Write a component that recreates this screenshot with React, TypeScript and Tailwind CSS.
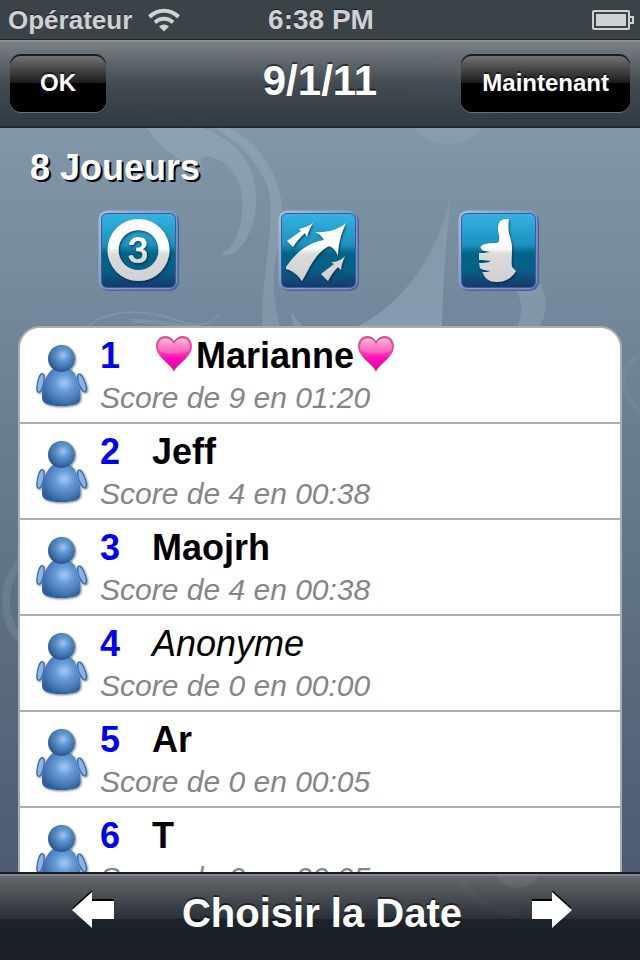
import React from "react";

type Player = { rank: number; name: string; score: number; time: string; hearts?: boolean; anonymous?: boolean };

const players: Player[] = [
  { rank: 1, name: "Marianne", score: 9, time: "01:20", hearts: true },
  { rank: 2, name: "Jeff", score: 4, time: "00:38" },
  { rank: 3, name: "Maojrh", score: 4, time: "00:38" },
  { rank: 4, name: "Anonyme", score: 0, time: "00:00", anonymous: true },
  { rank: 5, name: "Ar", score: 0, time: "00:05" },
  { rank: 6, name: "T", score: 0, time: "00:05" },
];

function Swirls() {
  return (
    <svg
      aria-hidden="true"
      viewBox="0 0 640 960"
      preserveAspectRatio="xMidYMid slice"
      className="pointer-events-none absolute inset-0 size-full"
    >
      <defs>
        <linearGradient id="wisp" x1="0" y1="0" x2="0" y2="1">
          <stop offset="0" stopColor="#b4cbdc" stopOpacity="0.1" />
          <stop offset="1" stopColor="#b4cbdc" stopOpacity="0.32" />
        </linearGradient>
      </defs>
      <g fill="#b4cbdc" fillOpacity="0.22">
        <path d="M136 104C146 136 168 158 204 170C196 160 202 154 212 157C236 166 244 186 242 212C240 236 232 250 220 254C224 258 236 254 243 244C256 226 258 202 254 180C246 148 222 134 196 126C170 118 150 114 136 104Z" />
        <path d="M186 116C224 128 256 154 268 188C277 222 262 262 262 330H281C273 300 271 272 278 250C288 222 282 188 268 164C252 138 226 120 186 116Z" />
        <path d="M516 290C524 304 522 316 516 330H538C548 314 548 296 540 284Z" />
        <path d="M292 311C294 318 300 324 308 330H296C292 324 291 318 292 311Z" />
      </g>
      <path d="M454 170C450 226 418 300 350 330H442C443 270 448 220 454 170Z" fill="url(#wisp)" />
      <circle cx="448" cy="100" r="44" fill="#b4cbdc" fillOpacity="0.12" />
      <g fill="none" stroke="#b4cbdc" strokeOpacity="0.18" strokeWidth="2">
        <path d="M86 328C110 306 150 310 182 322C200 328 214 322 219 315" />
        <path d="M132 321C160 320 170 326 200 327" strokeWidth="4" />
        <path d="M648 350C616 366 616 392 648 420" strokeWidth="5" strokeOpacity="0.08" />
        <path d="M30 556C-2 572 -2 630 30 646" strokeWidth="8" strokeOpacity="0.14" />
        <path d="M456 872C466 894 488 912 522 914" strokeWidth="8" />
      </g>
      <circle cx="517" cy="864" r="24" fill="#c8d4e6" fillOpacity="0.5" />
    </svg>
  );
}

function Tile({ label, children }: { label: string; children: React.ReactNode }) {
  return (
    <button type="button" aria-label={label} className="block">
      <svg viewBox="0 0 82 82" className="size-[82px]">
        <defs>
          <linearGradient id="tileBlue" x1="0" y1="0" x2="0" y2="1">
            <stop offset="0" stopColor="#35b2e1" />
            <stop offset="0.42" stopColor="#1e91bf" />
            <stop offset="0.54" stopColor="#006587" />
            <stop offset="0.75" stopColor="#07608a" />
            <stop offset="1" stopColor="#163b6c" />
          </linearGradient>
          <linearGradient id="tileRim" x1="0" y1="0" x2="1" y2="1">
            <stop offset="0" stopColor="#a9bfe0" />
            <stop offset="0.5" stopColor="#7f9bcb" />
            <stop offset="1" stopColor="#7890c2" />
          </linearGradient>
          <linearGradient id="tileInk" gradientUnits="userSpaceOnUse" x1="0" y1="8" x2="0" y2="72">
            <stop offset="0" stopColor="#ffffff" />
            <stop offset="0.46" stopColor="#ffffff" />
            <stop offset="0.56" stopColor="#dcdcdd" />
            <stop offset="1" stopColor="#d0d0d2" />
          </linearGradient>
          <filter id="tileShadow" x="-20%" y="-20%" width="140%" height="140%">
            <feDropShadow dx="1" dy="1.5" stdDeviation="1" floodColor="#022c44" floodOpacity="0.75" />
          </filter>
        </defs>
        <rect x="2" y="2" width="79" height="79" rx="9" fill="#4f5f9c" />
        <rect x="0.5" y="0.5" width="79" height="79" rx="9" fill="url(#tileRim)" />
        <rect x="3" y="3" width="75" height="75" rx="6" fill="#3c5a9c" />
        <rect x="4" y="4" width="73" height="73" rx="5" fill="url(#tileBlue)" />
        <g filter="url(#tileShadow)" fill="url(#tileInk)">
          {children}
        </g>
      </svg>
    </button>
  );
}

function Heart() {
  return (
    <svg aria-hidden="true" viewBox="0 0 44 40" className="h-10 w-11 shrink-0">
      <defs>
        <linearGradient id="heartFill" x1="0" y1="0" x2="0" y2="1">
          <stop offset="0" stopColor="#e0559a" />
          <stop offset="0.45" stopColor="#ff3db4" />
          <stop offset="0.65" stopColor="#ff08b8" />
          <stop offset="1" stopColor="#e400a4" />
        </linearGradient>
        <linearGradient id="heartGloss" x1="0" y1="0" x2="0" y2="1">
          <stop offset="0" stopColor="#ffc4e0" />
          <stop offset="0.4" stopColor="#ff8cc8" />
          <stop offset="1" stopColor="#ff5cbc" />
        </linearGradient>
      </defs>
      <path
        d="M22 35C19 28 4.500 21 4.500 10.500C4.500 4 8.500 0.500 13 0.500C17 0.500 20.500 2.500 22 6C23.500 2.500 27 0.500 31 0.500C35.500 0.500 39.500 4 39.500 10.500C39.500 21 25 28 22 35Z"
        fill="url(#heartFill)"
        stroke="#c93c85"
        strokeWidth="0.8"
      />
      <path
        d="M6.500 14C5 6 9 2.500 13 2.500C17 2.500 20.500 4.500 22 8.500C23.500 4.500 27 2.500 31 2.500C35 2.500 39 6 37.500 14C32 18 27 18 22 17C17 18 12 18 6.500 14Z"
        fill="url(#heartGloss)"
      />
    </svg>
  );
}

function Avatar() {
  return (
    <svg aria-hidden="true" viewBox="0 0 56 72" className="mt-3 ml-3.5 h-[72px] w-14 shrink-0">
      <defs>
        <radialGradient id="headFill" cx="0.56" cy="0.38" r="0.62">
          <stop offset="0" stopColor="#a3c6ee" />
          <stop offset="0.35" stopColor="#6197d0" />
          <stop offset="0.75" stopColor="#3d6fa9" />
          <stop offset="1" stopColor="#2b5588" />
        </radialGradient>
        <radialGradient id="bodyFill" cx="0.58" cy="0.38" r="0.62">
          <stop offset="0" stopColor="#a5ccf5" />
          <stop offset="0.4" stopColor="#6499d4" />
          <stop offset="0.85" stopColor="#4074b0" />
          <stop offset="1" stopColor="#305f98" />
        </radialGradient>
        <filter id="avatarShadow" x="-20%" y="-20%" width="150%" height="150%">
          <feDropShadow dx="1" dy="1" stdDeviation="1" floodColor="#000000" floodOpacity="0.5" />
        </filter>
      </defs>
      <g filter="url(#avatarShadow)">
        <ellipse cx="6.500" cy="43" rx="3" ry="9.500" transform="rotate(12 6.500 43)" fill="#8ab6e6" stroke="#3a6ba5" strokeWidth="1.2" />
        <ellipse cx="48" cy="43" rx="3" ry="9.500" transform="rotate(-20 48 43)" fill="#8ab6e6" stroke="#3a6ba5" strokeWidth="1.2" />
        <path d="M19 29C12 34 8 44 8 58C8 64 16 66 27 66C39 66 46.500 64 46.500 58C46.500 44 43 34 36 29Z" fill="url(#bodyFill)" />
        <circle cx="27.500" cy="18.500" r="13.500" fill="url(#headFill)" />
      </g>
    </svg>
  );
}

function PlayerRow({ player }: { player: Player }) {
  return (
    <li className="flex h-24 border-b-2 border-[#adadad]">
      <Avatar />
      <div className="ml-2.5 min-w-0 flex-1 pt-2">
        <div className="flex text-[36px] leading-10 font-bold">
          <span className="w-[52px] shrink-0 text-[#0000f5]">{player.rank}</span>
          {player.hearts && <Heart />}
          <span className={player.anonymous ? "font-normal italic" : ""}>{player.name}</span>
          {player.hearts && <Heart />}
        </div>
        <p className="text-[30px] leading-[44px] whitespace-nowrap text-[#858585] italic">
          Score de {player.score} en {player.time}
        </p>
      </div>
    </li>
  );
}

function BarButton({ children }: { children: React.ReactNode }) {
  return (
    <button
      type="button"
      className="block h-[58px] min-w-24 rounded-[11px] bg-linear-to-b from-[#7a7a7a] from-0% via-[#1c1c1c] via-50% to-black to-50% px-[21px] text-[24px] leading-7 font-bold shadow-[inset_0_2px_0_#1b1e21,0_1px_0_#6b7176] text-shadow-[0_-2px_0_#00000080]"
    >
      {children}
    </button>
  );
}

export default function App() {
  return (
    <div className="relative flex h-screen flex-col overflow-hidden bg-linear-to-b from-[#8aa2b1] to-[#46546b] font-['Liberation_Sans',Arial,sans-serif] text-white">
      <Swirls />

      <div className="relative grid h-10 shrink-0 grid-cols-[1fr_auto_1fr] items-center border-b border-[#1e2428] bg-[#2c3236]/85 px-2 pr-1.5 font-bold text-[#cfd1d3] text-shadow-[0_-1px_0_#00000080]">
        <div className="flex items-center gap-4 text-[26px] leading-8">
          <span>Opérateur</span>
          <svg aria-hidden="true" viewBox="0 0 32 24" className="h-6 w-8" fill="none" stroke="#cfd1d3" strokeWidth="4">
            <path d="M1.500 9C9.500 0.700 22.500 0.700 30.500 9" />
            <path d="M7 14.500C12 9.500 20 9.500 25 14.500" />
            <path d="M16 23.500L11 18.500C14 15.700 18 15.700 21 18.500Z" fill="#cfd1d3" stroke="none" />
          </svg>
        </div>
        <span className="text-[28px] leading-8">6:38 PM</span>
        <svg aria-hidden="true" viewBox="0 0 42 20" className="h-5 w-[42px] justify-self-end">
          <rect x="1" y="1" width="36" height="18" rx="1" fill="none" stroke="#cfd1d3" strokeWidth="2" />
          <rect x="4" y="4" width="30" height="12" fill="#cfd1d3" />
          <path d="M38 7H41V13H38" fill="none" stroke="#cfd1d3" strokeWidth="2" />
        </svg>
      </div>

      <header className="relative grid h-[88px] shrink-0 grid-cols-[1fr_auto_1fr] items-center border-t-2 border-b-2 border-t-[#8b9092] border-b-[#23292d] bg-linear-to-b from-[#7a7c7e]/85 from-0% via-[#373d42]/85 via-50% to-[#24292e]/85 to-100% px-2.5 pb-0.5">
        <div><BarButton>OK</BarButton></div>
        <h1 className="pb-1 text-[42px] leading-[44px] font-bold text-shadow-[0_-2px_0_#00000080]">9/1/11</h1>
        <div className="justify-self-end"><BarButton>Maintenant</BarButton></div>
      </header>

      <main className="relative min-h-0 flex-1 overflow-hidden pt-5">
        <h2 className="px-[30px] text-[36px] leading-10 font-bold text-shadow-[2px_2px_0_#000000]">8 Joueurs</h2>
        <nav aria-label="Classements" className="mt-[22px] grid grid-cols-3 justify-items-center pr-[51px] pl-[49px]">
          <Tile label="Cible">
            <path fillRule="evenodd" d="M40.500 9A31 31 0 1 0 40.500 71A31 31 0 1 0 40.500 9ZM40.500 20A20 20 0 1 1 40.500 60A20 20 0 1 1 40.500 20Z" />
            <text x="40" y="53" textAnchor="middle" className="font-[Lato] text-[37px] font-bold">3</text>
          </Tile>
          <Tile label="Progression">
            <path d="M8 57C18 42 30 33 46 30C44 26 41 24 37 22C48 23 60 20 68 13C63 24 60 34 60 46C58 41 55 37 51 36C38 42 32 57 24 71C20 65 14 60 8 59Z" />
            <path d="M9 31L23 21L21 19C26 18 31 16 35 13C32 18 30 22 29 27L27 23C22 27 18 32 15 37Z" />
            <path d="M43 64L56 54L53 52C59 52 63 50 67 46C65 51 63 55 63 60L60 57C56 61 53 65 50 71Z" />
          </Tile>
          <Tile label="Favoris">
            <path d="M41 30C42 26 40 23 40 19C40 10 44 9 51 9C50 14 50 19 51 24C53 30 54 34 54 40C54 47 53 52 54 57L58 61C54 68 47 72 39 72C30 72 26 67 24.500 62C27 62 30 62 33 61C28 60 24 60 22 58L21 53C25 53 29 53 33 51C29 50 25 50 21 50V43C24 43 28 43 33 42C27 41 23 41 22.500 37.500C23 34 30 33 38 33C40 33 41 32 41 30Z" />
          </Tile>
        </nav>
        <ol className="mx-[18px] mt-[34px] overflow-hidden rounded-[22px] border-2 border-[#adadad] bg-white text-black">
          {players.map((player) => (
            <PlayerRow key={player.rank} player={player} />
          ))}
        </ol>
      </main>

      <footer className="relative flex h-[88px] shrink-0 items-center justify-between border-t-2 border-[#191d22] bg-linear-to-b from-[#6d6f70]/85 from-0% via-[#262a2e]/85 via-52% to-[#14181c]/85 to-52% pr-[68px] pb-2 pl-[72px] shadow-[inset_0_2px_0_#ffffff30]">
        <button type="button" aria-label="Date précédente" className="pb-2">
          <svg viewBox="0 0 42 37" className="h-[37px] w-[42px]">
            <path d="M0 17L20 -1V8H42V26H20Z" fill="#000000" />
            <path d="M0 19L20 1V10H42V28H20V37Z" fill="#ffffff" />
          </svg>
        </button>
        <button type="button" className="text-[40px] leading-[44px] font-bold text-shadow-[0_-2px_0_#00000080]">
          Choisir la Date
        </button>
        <button type="button" aria-label="Date suivante" className="pb-2">
          <svg viewBox="0 0 42 37" className="h-[37px] w-[42px]">
            <path d="M42 17L22 -1V8H2V26H22Z" fill="#000000" />
            <path d="M42 19L22 1V10H2V28H22V37Z" fill="#ffffff" />
          </svg>
        </button>
      </footer>
    </div>
  );
}
